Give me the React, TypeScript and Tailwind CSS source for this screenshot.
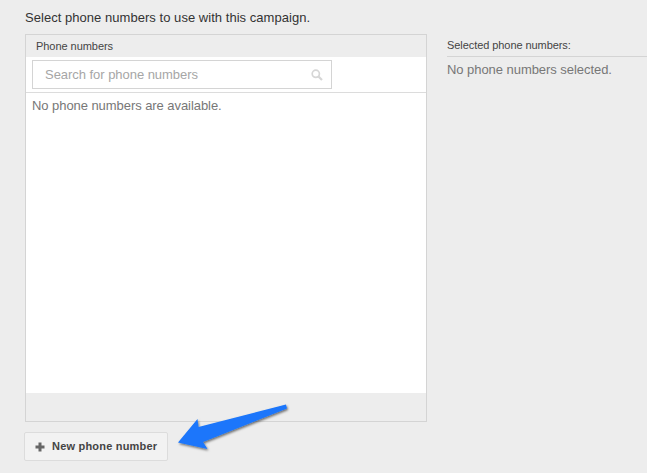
export default function App() {
  return (
    <div className="relative h-[473px] w-[647px] overflow-hidden bg-[#ededed] pl-[25px] font-['Liberation_Sans',Arial,sans-serif]">
      <p className="h-[34px] pt-[10px] text-[13px] leading-[15px] tracking-[0.04px] text-[#333]">Select phone numbers to use with this campaign.</p>
      <div className="flex">
        <div className="flex h-[388px] w-[402px] flex-col border border-[#d4d4d4]">
          <div className="h-[22px] shrink-0 pl-[10px] pt-[5px] text-[11px] leading-[13px] tracking-[-0.05px] text-[#444]">Phone numbers</div>
          <div className="flex min-h-0 flex-1 flex-col bg-white">
            <div className="h-[36px] shrink-0 border-b border-[#dcdcdc] pl-[6px] pt-[3px]">
              <div className="flex h-[29px] w-[300px] items-center justify-between border border-[#d4d4d4] pl-[12px] pr-[8px]">
                <span className="text-[13px] tracking-[-0.04px] text-[#a6a6a6]">Search for phone numbers</span>
                <svg width="12" height="12" viewBox="0 0 12 12" fill="none" stroke="#d6d6d6">
                  <circle cx="4.8" cy="4.8" r="3.6" strokeWidth="1.7" />
                  <path d="M7.5 7.5L11 11" strokeWidth="2.2" />
                </svg>
              </div>
            </div>
            <p className="pl-[6px] pt-[5px] text-[13px] leading-[15px] tracking-[-0.06px] text-[#777]">No phone numbers are available.</p>
          </div>
          <div className="h-[28px] shrink-0" />
        </div>
        <div className="ml-[20px] flex-1">
          <div className="h-[23px] border-b border-[#d4d4d4] pt-[5px] text-[11px] leading-[13px] tracking-[-0.07px] text-[#444]">Selected phone numbers:</div>
          <p className="pt-[5px] text-[13px] leading-[15px] tracking-[-0.05px] text-[#777]">No phone numbers selected.</p>
        </div>
      </div>
      <button className="-ml-px mt-[10px] flex h-[29px] w-[144px] items-center rounded-[2px] border border-[#dcdcdc] bg-[#f2f2f2] pl-[10px] text-[11px] font-bold tracking-[0.2px] text-[#444]">
        <svg width="10" height="10" viewBox="0 0 10 10" className="mr-[7px]" fill="#666">
          <path d="M3.5 0.5h3v3h3v3h-3v3h-3v-3h-3v-3h3z" />
        </svg>
        New phone number
      </button>
      <svg className="absolute left-[170px] top-[398px]" width="130" height="62" viewBox="170 398 130 62">
        <defs>
          <filter id="s" x="-20%" y="-30%" width="140%" height="160%">
            <feDropShadow dx="1" dy="1.5" stdDeviation="1.2" floodColor="#000" floodOpacity="0.55" />
          </filter>
        </defs>
        <path d="M178 442.5L197.5 419L198.5 427L286 404.5L287 408.5L203 442L207.5 449Z" fill="#1a76fb" filter="url(#s)" />
      </svg>
    </div>
  );
}
